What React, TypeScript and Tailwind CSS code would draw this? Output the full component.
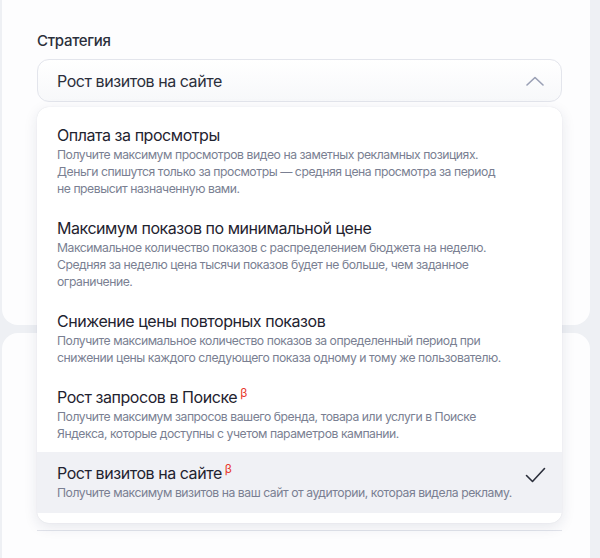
const OPTIONS = [
  {
    title: "Оплата за просмотры",
    lines: [
      "Получите максимум просмотров видео на заметных рекламных позициях.",
      "Деньги спишутся только за просмотры — средняя цена просмотра за период",
      "не превысит назначенную вами.",
    ],
  },
  {
    title: "Максимум показов по минимальной цене",
    lines: [
      "Максимальное количество показов с распределением бюджета на неделю.",
      "Средняя за неделю цена тысячи показов будет не больше, чем заданное",
      "ограничение.",
    ],
  },
  {
    title: "Снижение цены повторных показов",
    lines: [
      "Получите максимальное количество показов за определенный период при",
      "снижении цены каждого следующего показа одному и тому же пользователю.",
    ],
  },
  {
    title: "Рост запросов в Поиске",
    beta: true,
    lines: [
      "Получите максимум запросов вашего бренда, товара или услуги в Поиске",
      "Яндекса, которые доступны с учетом параметров кампании.",
    ],
  },
  {
    title: "Рост визитов на сайте",
    beta: true,
    selected: true,
    lines: ["Получите максимум визитов на ваш сайт от аудитории, которая видела рекламу."],
  },
];

export default function App() {
  return (
    <div className="relative h-[558px] overflow-hidden bg-[#eef0f4] pl-[2px] pr-[10px] font-['Inter',sans-serif]">
      {/* верхняя карточка */}
      <div className="h-[325px] rounded-b-2xl bg-[#fdfdfe] pl-[35px] pr-[28px] pt-[31px]">
        <div className="text-[15px] font-medium leading-5 tracking-[-0.3px] text-[#2b2f3b]">Стратегия</div>
        <div className="mt-[8px] flex h-[43px] items-center justify-between rounded-xl border border-[#e3e5ec] bg-gradient-to-b from-white to-[#f7f8fa] pl-[19px] pr-[16px]">
          <span className="text-[16px] tracking-[-0.45px] text-[#2b2f3b]">Рост визитов на сайте</span>
          <svg width="18" height="10" viewBox="0 0 18 10" fill="none" className="mr-[1px]">
            <path d="M1 9 9 1.5 17 9" stroke="#9aa0b5" strokeWidth="1.6" strokeLinecap="round" strokeLinejoin="round" />
          </svg>
        </div>
      </div>

      {/* нижняя карточка */}
      <div className="mt-[8px] h-[300px] rounded-t-2xl bg-[#fdfdfe] pl-[35px] pr-[28px] pt-[197px]">
        <div className="h-px bg-[#e2e4eb]" />
      </div>

      {/* выпадающий список */}
      <div className="absolute left-[37px] top-[107px] w-[525px] rounded-xl bg-white pb-[10px] pt-[7px] shadow-[0_4px_14px_rgba(30,40,80,0.10),0_0_1px_rgba(30,40,80,0.14)]">
        {OPTIONS.map((o) => (
          <div
            key={o.title}
            className={`flex items-start justify-between pl-[20px] pr-[15px] ${o.selected ? "bg-[#f0f1f5] pb-[12px] pt-[10px]" : "py-[10px]"}`}
          >
            <div>
              <div className="text-[16px] leading-[22px] tracking-[-0.45px] text-[#1f2330]">
                {o.title}
                {o.beta && (
                  <sup className="ml-[3px] text-[12px] tracking-normal text-[#e8382c]">β</sup>
                )}
              </div>
              <div className="text-[12.2px] leading-[17px] tracking-[-0.45px] text-[#7a7f92]">
                {o.lines.map((l) => (
                  <div key={l}>{l}</div>
                ))}
              </div>
            </div>
            {o.selected && (
              <svg width="21" height="16" viewBox="0 0 21 16" fill="none" className="mr-[1px] mt-[5px]">
                <path d="M1.5 8.5 7.5 14.5 19.5 1.5" stroke="#2b2f3b" strokeWidth="1.6" strokeLinecap="round" strokeLinejoin="round" />
              </svg>
            )}
          </div>
        ))}
      </div>
    </div>
  );
}
